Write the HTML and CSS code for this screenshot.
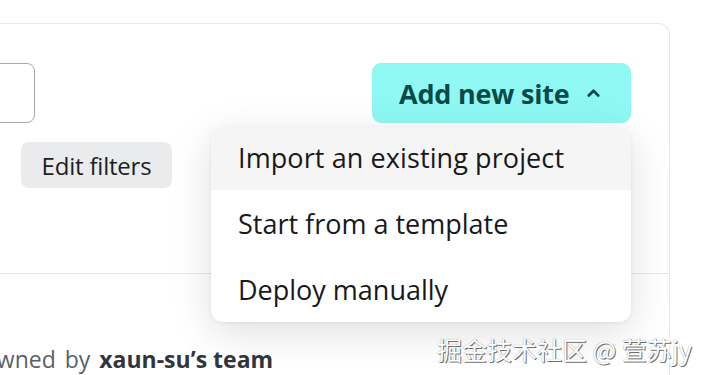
FILE: index.html
```html
<!DOCTYPE html>
<html lang="en">
<head>
<meta charset="utf-8">
<title>Sites</title>
<link rel="stylesheet" href="styles.css">
</head>
<body>
<div class="card">
  <div class="toolbar">
    <div class="filters">
      <div class="search"></div>
      <button class="btn-gray">Edit filters</button>
    </div>
    <div class="add-wrap">
      <button class="btn-add">Add new site
        <svg class="caret" width="13" height="8" viewBox="0 0 13 8"><path d="M1.8 6.5 L6.5 1.8 L11.2 6.5" fill="none" stroke="currentColor" stroke-width="2.8" stroke-linecap="round" stroke-linejoin="round"/></svg>
      </button>
      <ul class="menu">
        <li class="menu-item active">Import an existing project</li>
        <li class="menu-item">Start from a template</li>
        <li class="menu-item">Deploy manually</li>
      </ul>
    </div>
  </div>
  <div class="owner">owned by <b>xaun-su’s team</b></div>
</div>
<div class="watermark">掘金技术社区 @ 萱苏jy</div>
</body>
</html>
```

FILE: styles.css
```css
html, body {
  margin: 0;
  padding: 0;
  background: #ffffff;
  overflow: hidden;
  height: 375px;
}
body {
  font-family: "Open Sans", "Noto Sans", sans-serif;
  color: #1d1f22;
  position: relative;
}
.card {
  margin: 23px 0 0 -60px;
  width: 728px;
  height: 400px;
  border: 1px solid #e9e9eb;
  border-bottom: none;
  border-radius: 12px 12px 0 0;
  background: #fff;
}
.toolbar {
  display: flex;
  justify-content: space-between;
  align-items: flex-start;
  height: 210px;
  padding: 39px 38px 0 0;
  border-bottom: 1px solid #e6e6e8;
}
.filters {
  display: flex;
  flex-direction: column;
  align-items: flex-start;
}
.search {
  width: 92px;
  height: 58px;
  border: 1px solid #a5a8ad;
  border-radius: 8px;
}
.btn-gray {
  margin: 19px 0 0 80px;
  width: 151px;
  height: 46px;
  border: none;
  border-radius: 8px;
  background: #e9ebed;
  font-family: inherit;
  font-size: 24px;
  color: #1d1f22;
  padding: 0;
  letter-spacing: -0.2px;
}
.add-wrap {
  position: relative;
}
.btn-add {
  display: flex;
  align-items: center;
  gap: 17px;
  width: 259px;
  height: 60px;
  box-sizing: border-box;
  padding: 0 31px 0 27px;
  border: none;
  border-radius: 9px;
  background: #8ff8f2;
  color: #0b4a49;
  font-family: inherit;
  font-weight: 700;
  font-size: 27px;
  letter-spacing: -0.2px;
}
.caret {
  display: block;
  flex: none;
}
.menu {
  position: absolute;
  top: calc(100% + 4px);
  right: 0;
  width: 420px;
  margin: 0;
  padding: 0;
  list-style: none;
  background: #fff;
  border-radius: 12px;
  overflow: hidden;
  box-shadow: 0 10px 40px rgba(0, 0, 0, 0.13), 0 1px 4px rgba(0, 0, 0, 0.06);
}
.menu-item {
  height: 66px;
  display: flex;
  align-items: center;
  padding-left: 27px;
  font-size: 27px;
  color: #18191b;
}
.menu-item.active {
  background: #f5f5f6;
  padding-bottom: 2px;
  box-sizing: border-box;
  height: 63px;
  letter-spacing: 0.1px;
}
.owner {
  padding: 69px 0 0 42px;
  font-size: 23px;
  color: #5b5f66;
  word-spacing: 3px;
}
.owner b {
  color: #32363c;
  font-weight: 700;
  word-spacing: 0;
}
.watermark {
  position: absolute;
  left: 437px;
  top: 331px;
  font-family: "Noto Sans CJK SC", sans-serif;
  font-size: 25px;
  color: #ffffff;
  text-shadow: 1px 1px 0 #6f6f6f, 0 0 1px #888;
  white-space: nowrap;
}
```
